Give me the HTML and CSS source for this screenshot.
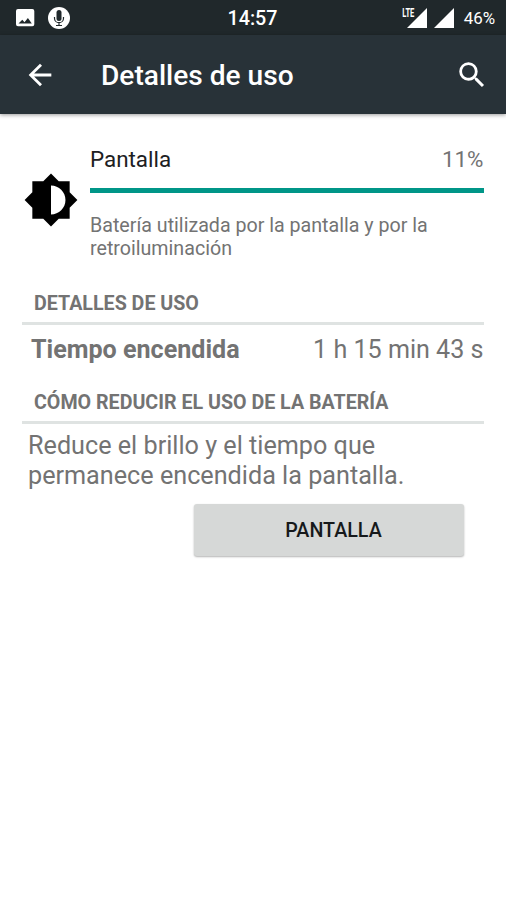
FILE: index.html
```
<!DOCTYPE html>
<html lang="es">
<head>
<meta charset="utf-8">
<title>Detalles de uso</title>
<link rel="stylesheet" href="styles.css">
</head>
<body>
<div class="status">
  <div class="notifications">
    <svg width="20" height="20" viewBox="0 0 20 20"><path fill="#fff" fill-rule="evenodd" d="M3 .9h14.300a2 2 0 0 1 2 2v13.300a2 2 0 0 1-2 2H3a2 2 0 0 1-2-2V2.900a2 2 0 0 1 2-2zM3.500 15.500h13.300l-3.900-5.500-3.400 4.200-2.200-2.400z"/></svg>
    <svg width="22" height="22" viewBox="0 0 22 22"><circle cx="11" cy="11" r="11" fill="#fff"/><rect x="8.500" y="3" width="5" height="11" rx="2.500" fill="#20282b"/><path d="M6.500 10v1.200a4.500 4.500 0 0 0 9 0V10M11 16v2.500M8 18.500h6" fill="none" stroke="#20282b" stroke-width="1.200"/></svg>
  </div>
  <div class="clock">14:57</div>
  <div class="signals">
    <span class="lte">LTE</span>
    <svg class="signal" width="20" height="20" viewBox="0 0 20 20"><path d="M20 0v20H0z" fill="#fff"/></svg>
    <svg class="signal" width="20" height="20" viewBox="0 0 20 20"><path d="M20 0v20H0z" fill="#fff"/></svg>
    <span class="battery">46%</span>
  </div>
</div>
<header class="toolbar">
  <svg width="34" height="34" viewBox="0 0 24 24"><path fill="#fff" d="M20 11H7.830l5.590-5.590L12 4l-8 8 8 8 1.410-1.410L7.830 13H20v-2z"/></svg>
  <h1>Detalles de uso</h1>
  <svg width="34" height="34" viewBox="0 0 24 24"><path fill="#fff" d="M15.500 14h-.79l-.28-.27A6.471 6.471 0 0 0 16 9.500 6.500 6.500 0 1 0 9.500 16c1.610 0 3.090-.59 4.230-1.570l.27.28v.79l5 4.990L20.490 19l-4.990-5zm-6 0C7.010 14 5 11.990 5 9.500S7.010 5 9.500 5 14 7.010 14 9.500 11.990 14 9.500 14z"/></svg>
</header>
<main>
  <section class="summary">
    <svg class="brightness" width="56" height="56" viewBox="0 0 24 24"><path d="M20 15.310L23.310 12 20 8.690V4h-4.690L12 .69 8.690 4H4v4.690L.69 12 4 15.310V20h4.690L12 23.310 15.310 20H20v-4.690zM12 18.200V5.800c3.420 0 6.200 2.780 6.200 6.200s-2.780 6.200-6.200 6.200z"/></svg>
    <div class="usage">
      <div class="usage-head"><span class="name">Pantalla</span><span>11%</span></div>
      <div class="bar"></div>
      <p>Batería utilizada por la pantalla y por la retroiluminación</p>
    </div>
  </section>
  <h2>DETALLES DE USO</h2>
  <div class="row"><b>Tiempo encendida</b><span>1 h 15 min 43 s</span></div>
  <h2>CÓMO REDUCIR EL USO DE LA BATERÍA</h2>
  <p class="tip">Reduce el brillo y el tiempo que permanece encendida la pantalla.</p>
  <button class="action">PANTALLA</button>
</main>
</body>
</html>
```
FILE: styles.css
```
* { box-sizing: border-box; }
body {
  margin: 0;
  min-height: 900px;
  background: #fff;
  color: #737373;
  font-family: Roboto, sans-serif;
}
svg { display: block; flex: none; }
h1, h2, p { margin: 0; }
.status {
  display: grid;
  grid-template-columns: 1fr auto 1fr;
  align-items: center;
  height: 35px;
  padding: 1px 11px 0 15px;
  background: #20282b;
  color: #fff;
}
.notifications { display: flex; align-items: center; gap: 13px; }
.clock {
  margin: 2px 5px 0 0;
  font-size: 19.7px;
  font-weight: 500;
  line-height: 24px;
}
.signals { display: flex; align-items: center; justify-content: flex-end; }
.lte {
  align-self: flex-start;
  margin: -1px -8px 0 0;
  font-size: 12px;
  font-weight: 700;
  line-height: 12px;
  transform: scaleX(.63);
  transform-origin: right;
}
.signal { margin-right: 7px; }
.battery { margin-left: 3px; font-size: 16.900px; line-height: 20px; }
.toolbar {
  display: flex;
  align-items: center;
  height: 79px;
  padding: 0 17px 0 22.5px;
  background: #283238;
  color: #fff;
  box-shadow: 0 1px 4px rgba(0, 0, 0, .4);
}
.toolbar h1 {
  flex: 1;
  margin: 2px 0 0 44.5px;
  font-size: 28.1px;
  font-weight: 500;
  line-height: 34px;
}
main { padding: 32px 22.5px 0 22px; }
.summary { display: flex; height: 142px; }
.brightness { margin: 26px 11.5px 0 .5px; }
.usage { flex: 1; }
.usage-head {
  display: flex;
  justify-content: space-between;
  font-size: 22.4px;
  line-height: 27px;
}
.name { color: #1c2022; }
.bar { height: 5px; margin: 15px 0 21px; background: #009688; }
.usage p { font-size: 19.65px; line-height: 23px; }
h2 {
  height: 37px;
  padding: 4px 0 0 12px;
  border-bottom: 3px solid #dfe3e2;
  font-size: 19.65px;
  font-weight: 700;
  line-height: 24px;
}
.row {
  display: flex;
  justify-content: space-between;
  height: 62px;
  padding: 10px 0 0 9px;
  font-size: 25.1px;
  line-height: 30px;
}
.tip { padding: 7px 60px 0 6px; font-size: 25.2px; line-height: 29.500px; }
.action {
  display: block;
  width: 270px;
  height: 52px;
  margin: 14px 19.5px 0 auto;
  padding: 2px 0 0 9px;
  border: 0;
  border-radius: 3px;
  background: #d6d8d7;
  box-shadow: 0 1px 2px rgba(0, 0, 0, .3);
  color: #16191b;
  font: 500 19.7px/24px Roboto, sans-serif;
}
```
